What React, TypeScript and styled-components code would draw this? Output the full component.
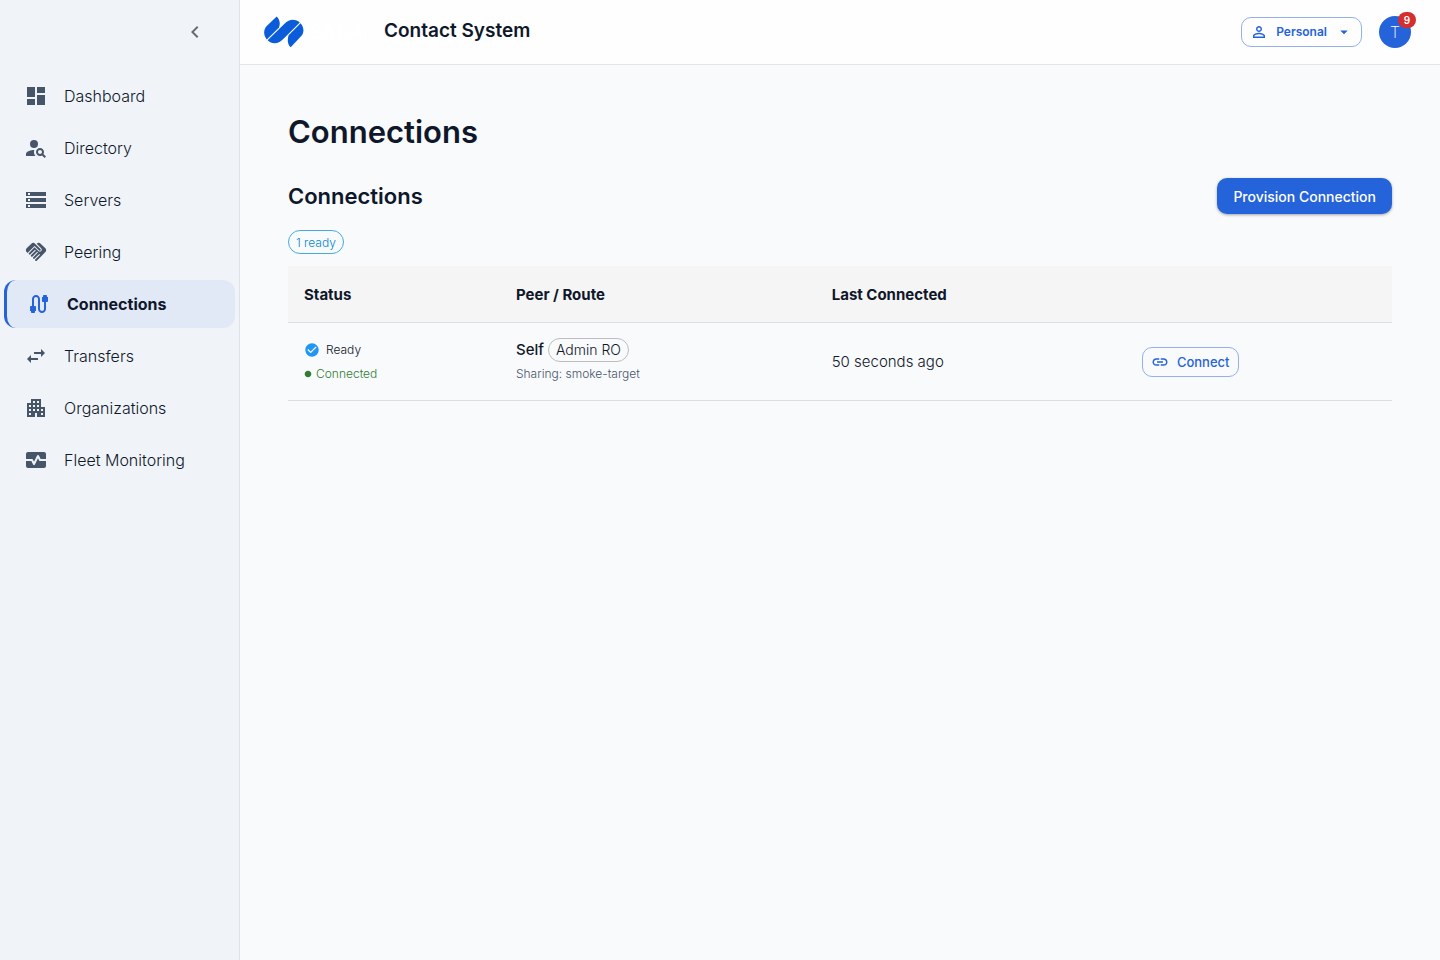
import React from "react";
import styled, { createGlobalStyle, css } from "styled-components";
import {
  MdApartment,
  MdArrowDropDown,
  MdCable,
  MdCheckCircle,
  MdChevronLeft,
  MdCircle,
  MdDashboard,
  MdHandshake,
  MdLink,
  MdMonitorHeart,
  MdPersonSearch,
  MdPersonOutline,
  MdStorage,
  MdSwapHoriz,
} from "react-icons/md";

const ink = "#0f172a";
const blue = "#2563db";

const GlobalStyle = createGlobalStyle`
  *, *::before, *::after { box-sizing: border-box; }
  body {
    margin: 0;
    background: #f9fafc;
    color: ${ink};
    font-family: Inter, "Liberation Sans", sans-serif;
    font-size: 15px;
    font-weight: 300;
  }
  button { font-family: inherit; cursor: pointer; }
`;

const Shell = styled.div`
  display: flex;
  min-height: 100vh;
`;

const Sidebar = styled.aside`
  flex: 0 0 240px;
  background: #f0f4f9;
  border-right: 1px solid #dde2e8;
`;

const SidebarTop = styled.div`
  display: flex;
  justify-content: flex-end;
  align-items: center;
  height: 64px;
  padding-right: 24px;
`;

const CollapseButton = styled.button`
  display: flex;
  padding: 8px;
  border: 0;
  background: none;
  color: #6b6b6f;
  font-size: 24px;
`;

const NavList = styled.nav`
  display: flex;
  flex-direction: column;
  gap: 4px;
  padding: 8px 4px;
`;

const NavLink = styled.a<{ $active?: boolean }>`
  display: flex;
  align-items: center;
  gap: 16px;
  height: 48px;
  padding: 0 20px;
  border-radius: 12px;
  color: ${ink};
  font-size: 16px;
  line-height: 24px;
  text-decoration: none;
  svg { flex: none; font-size: 24px; color: #475569; }
  ${(p) =>
    p.$active &&
    css`
      border-left: 3px solid ${blue};
      background: #e1e8f6;
      font-weight: 700;
      svg { color: ${blue}; }
    `}
`;

const Content = styled.div`
  flex: 1;
  min-width: 0;
`;

const Header = styled.header`
  display: flex;
  align-items: center;
  height: 65px;
  padding: 0 24px;
  border-bottom: 1px solid #e2e6eb;
  background: #fefefe;
`;

const Brand = styled.a`
  display: flex;
  align-items: center;
  gap: 5px;
  width: 120px;
  color: #fff;
  font-size: 20px;
  font-weight: 700;
  line-height: 24px;
  text-decoration: none;
`;

const ProductName = styled.div`
  flex: 1;
  padding-bottom: 2px;
  font-size: 19px;
  font-weight: 600;
  line-height: 28px;
`;

const OutlineButton = styled.button<{ $compact?: boolean }>`
  display: inline-flex;
  align-items: center;
  gap: 8px;
  height: 30px;
  padding: 0 8px;
  border: 1px solid #92b1ed;
  border-radius: 10px;
  background: transparent;
  color: ${blue};
  font-size: ${(p) => (p.$compact ? 12 : 13)}px;
  font-weight: ${(p) => (p.$compact ? 600 : 500)};
  line-height: 24px;
  svg { font-size: 18px; }
`;

const AvatarButton = styled.button`
  position: relative;
  width: 32px;
  height: 32px;
  margin: 0 5px 0 17px;
  padding: 0;
  border: 0;
  border-radius: 50%;
  background: ${blue};
  color: #fff;
  font-size: 16px;
  font-weight: 200;
`;

const Badge = styled.span`
  position: absolute;
  top: -4px;
  right: -5px;
  width: 18px;
  height: 16px;
  border-radius: 8px;
  background: #d32f2f;
  font-size: 10px;
  font-weight: 600;
  line-height: 16px;
`;

const Main = styled.main`
  padding: 48px;
`;

const PageTitle = styled.h1`
  margin: 0 0 27px;
  font-size: 31px;
  font-weight: 600;
  line-height: 38px;
`;

const SectionBar = styled.div`
  display: flex;
  align-items: center;
  justify-content: space-between;
  margin-bottom: 16px;
`;

const SectionTitle = styled.h2`
  margin: 0;
  font-size: 22px;
  font-weight: 600;
  line-height: 36px;
`;

const PrimaryButton = styled.button`
  height: 36px;
  padding: 0 16px;
  border: 0;
  border-radius: 10px;
  background: ${blue};
  box-shadow: 0 1px 3px rgba(0, 0, 0, 0.35);
  color: #fff;
  font-size: 14px;
  font-weight: 500;
`;

const Chip = styled.span<{ $info?: boolean }>`
  display: inline-flex;
  align-items: center;
  height: 24px;
  padding: 0 7px;
  border: 1px solid ${(p) => (p.$info ? "#45aadf" : "#bdbdbd")};
  border-radius: 12px;
  color: ${(p) => (p.$info ? "#0288d1" : ink)};
  font-size: ${(p) => (p.$info ? 12 : 14)}px;
  font-weight: 300;
`;

const Summary = styled.div`
  display: flex;
  margin-bottom: 12px;
`;

const Table = styled.table`
  width: 100%;
  border-collapse: separate;
  border-spacing: 0;
  table-layout: fixed;
`;

const Column = styled.col<{ $share: string }>`
  width: ${(p) => p.$share};
`;

const HeadCell = styled.th`
  height: 57px;
  padding: 0 16px;
  border-bottom: 1px solid #dedfe1;
  background: #f5f5f5;
  font-size: 15px;
  font-weight: 700;
  text-align: left;
`;

const Cell = styled.td`
  height: 78px;
  padding: 0 16px;
  border-bottom: 1px solid #dedfe1;
  vertical-align: middle;
`;

const Line = styled.div<{ $tone?: string; $gap?: number }>`
  display: flex;
  align-items: center;
  gap: ${(p) => p.$gap ?? 4}px;
  min-height: 24px;
  color: ${(p) => p.$tone ?? ink};
  font-size: 12px;
  line-height: 20px;
`;

const PeerName = styled.span`
  font-size: 15px;
  font-weight: 500;
`;

const nav = [
  { label: "Dashboard", Icon: MdDashboard },
  { label: "Directory", Icon: MdPersonSearch },
  { label: "Servers", Icon: MdStorage },
  { label: "Peering", Icon: MdHandshake },
  { label: "Connections", Icon: MdCable, active: true },
  { label: "Transfers", Icon: MdSwapHoriz },
  { label: "Organizations", Icon: MdApartment },
  { label: "Fleet Monitoring", Icon: MdMonitorHeart },
];

const Logo = () => (
  <svg width="40" height="32" viewBox="0 0 40 32" aria-hidden="true">
    <g fill="#0b5cd8">
      <path d="M12.7 .5C15.600 3 16.500 7.500 15 11.500L2.800 23.400C-.6 19.500-.8 13.700 2.700 10.100Z" />
      <path d="M3.600 24.200L20.500 7.700C25.200 2.900 31.500 2.700 35.800 6.500L20 22.200C15.500 27.700 8.200 29 3.600 24.200Z" />
      <path d="M36.600 7.200C40.400 11.400 40.300 17 36.800 20.600L26.700 31.300C23.600 28.500 23.100 24 24.600 19.300Z" />
    </g>
  </svg>
);

export default function App() {
  return (
    <Shell>
      <GlobalStyle />
      <Sidebar>
        <SidebarTop>
          <CollapseButton aria-label="Collapse sidebar"><MdChevronLeft /></CollapseButton>
        </SidebarTop>
        <NavList>
          {nav.map(({ label, Icon, active }) => (
            <NavLink key={label} href="#" $active={active} aria-current={active ? "page" : undefined}>
              <Icon />
              {label}
            </NavLink>
          ))}
        </NavList>
      </Sidebar>
      <Content>
        <Header>
          <Brand href="#"><Logo />SAGA</Brand>
          <ProductName>Contact System</ProductName>
          <OutlineButton $compact><MdPersonOutline />Personal<MdArrowDropDown /></OutlineButton>
          <AvatarButton>T<Badge>9</Badge></AvatarButton>
        </Header>
        <Main>
          <PageTitle>Connections</PageTitle>
          <SectionBar>
            <SectionTitle>Connections</SectionTitle>
            <PrimaryButton>Provision Connection</PrimaryButton>
          </SectionBar>
          <Summary><Chip $info>1 ready</Chip></Summary>
          <Table>
            <colgroup>
              <Column $share="19.2%" />
              <Column $share="28.6%" />
              <Column $share="28.1%" />
              <Column $share="24.1%" />
            </colgroup>
            <thead>
              <tr>
                <HeadCell>Status</HeadCell>
                <HeadCell>Peer / Route</HeadCell>
                <HeadCell>Last Connected</HeadCell>
                <HeadCell aria-label="Actions" />
              </tr>
            </thead>
            <tbody>
              <tr>
                <Cell>
                  <Line $gap={6}><MdCheckCircle size={16} color="#2196f3" />Ready</Line>
                  <Line $tone="#2e7d32"><MdCircle size={8} />Connected</Line>
                </Cell>
                <Cell>
                  <Line><PeerName>Self</PeerName><Chip>Admin RO</Chip></Line>
                  <Line $tone="#475569">Sharing: smoke-target</Line>
                </Cell>
                <Cell>50 seconds ago</Cell>
                <Cell><OutlineButton><MdLink />Connect</OutlineButton></Cell>
              </tr>
            </tbody>
          </Table>
        </Main>
      </Content>
    </Shell>
  );
}
